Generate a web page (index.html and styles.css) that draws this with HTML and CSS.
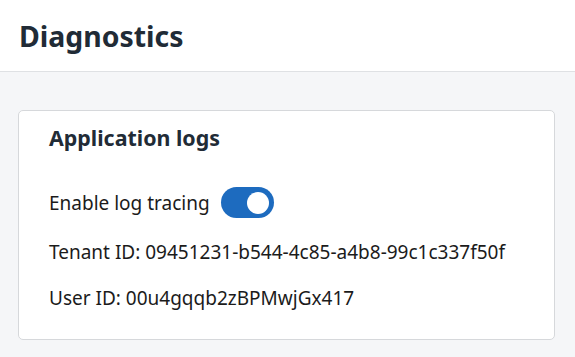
FILE: index.html
```html
<!DOCTYPE html>
<html lang="en">
<head>
  <meta charset="UTF-8" />
  <meta name="viewport" content="width=device-width, initial-scale=1.0" />
  <title>Diagnostics</title>
  <link rel="stylesheet" href="styles.css">
</head>
<body>
  <header class="page-header">
    <h1>Diagnostics</h1>
  </header>
  <main class="content">
    <section class="card">
      <h2>Application logs</h2>
      <div class="row toggle-row">
        <span>Enable log tracing</span>
        <button class="toggle on" onclick="this.classList.toggle('on')" aria-label="Enable log tracing"><span class="knob"></span></button>
      </div>
      <div class="row">Tenant ID: 09451231-b544-4c85-a4b8-99c1c337f50f</div>
      <div class="row">User ID: 00u4gqqb2zBPMwjGx417</div>
    </section>
  </main>
</body>
</html>
```

FILE: styles.css
```css
body {
  font-family: 'Noto Sans', sans-serif;
  margin: 0;
  background: #f5f6f8;
  color: #1b1b1b;
  height: 357px;
}
.page-header {
  background: white;
  height: 71px;
  border-bottom: 1px solid #dfe1e4;
  display: flex;
  align-items: center;
  padding: 0 19px;
}
.page-header h1 {
  margin: 0;
  font-size: 28.4px;
  font-weight: 700;
  color: #212b36;
}
.content {
  padding: 38px 20px 0 18px;
}
.card {
  background: white;
  border: 1px solid #d6d8db;
  border-radius: 5px;
  padding: 12px 30px 29px;
}
.card h2 {
  margin: 0 0 35px;
  font-size: 21.4px;
  font-weight: 700;
  color: #212b36;
}
.row {
  font-size: 19px;
  line-height: 24px;
  margin-bottom: 22px;
}
.row:last-child {
  margin-bottom: 0;
}
.toggle-row {
  display: flex;
  align-items: center;
  gap: 11px;
}
.toggle {
  width: 53px;
  height: 31px;
  border: none;
  border-radius: 16px;
  background: #b9bec5;
  padding: 0;
  position: relative;
  cursor: pointer;
}
.toggle.on {
  background: #1d6bbf;
}
.knob {
  position: absolute;
  top: 4.5px;
  left: 5px;
  width: 22px;
  height: 22px;
  border-radius: 50%;
  background: white;
}
.toggle.on .knob {
  left: 26px;
}
```
